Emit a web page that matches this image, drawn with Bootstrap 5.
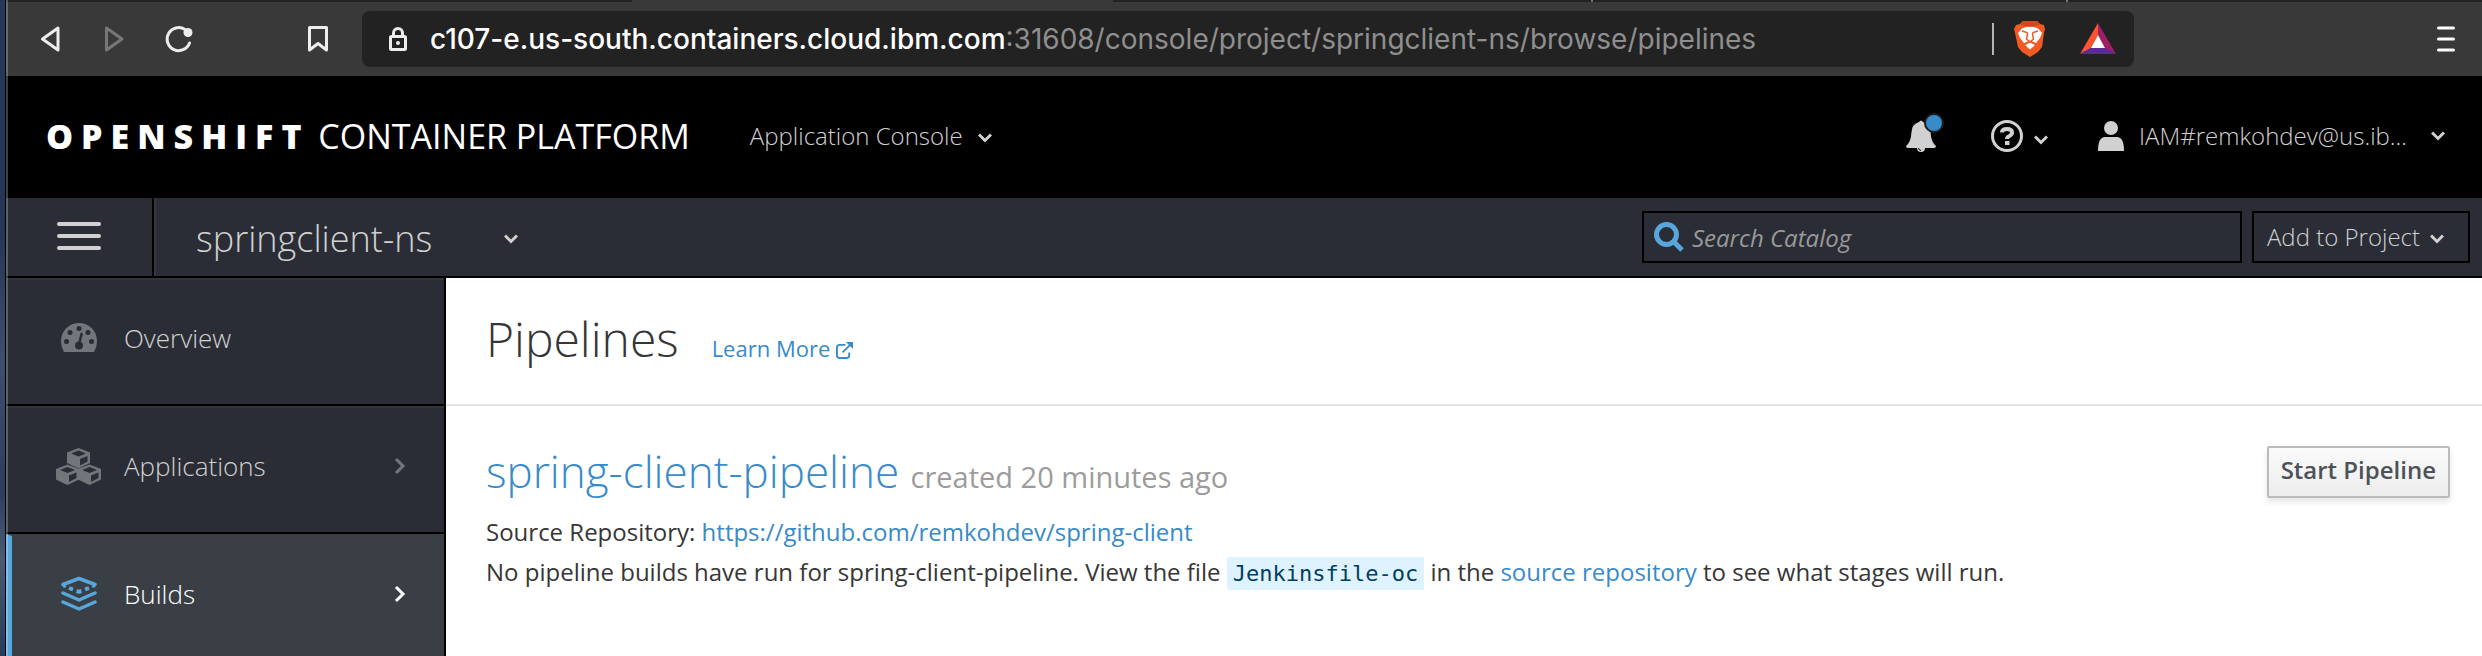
<!DOCTYPE html>
<html lang="en">
<head>
<meta charset="utf-8">
<meta name="viewport" content="width=device-width, initial-scale=1">
<title>Pipelines - OpenShift Container Platform</title>
<link href="https://cdn.jsdelivr.net/npm/bootstrap@5.3.0/dist/css/bootstrap.min.css" rel="stylesheet">
<style>
  body { font-family: "Open Sans", sans-serif; font-size: 24px; line-height: 40px; color: #363636; background: #fff; }
  svg { display: block; flex: none; }
  button { border: 0; background: none; padding: 0; color: inherit; font-weight: inherit; }
  a { color: #398ac9; text-decoration: none; }
  .desk { width: 6px; background: linear-gradient(#27395a, #243655 35%, #3d4f70 55%, #2b3d5e 75%, #4b5b75 85%, #293b5c); border-right: 1px solid #000; }
  .edge { width: 2px; background: rgba(255,255,255,.25); left: 0; top: 0; bottom: 0; z-index: 2; }
  .tabstrip { height: 2px; background: #393939; }
  .tabstrip .idle { background: #222; }
  .tabstrip .tick { width: 2px; background: #777; }
  .toolbar { min-height: 74px; background: #393939; color: #ededed; padding: 0 26px 0 34px; }
  .forward { margin-left: 42px; }
  .reload { margin-left: 38px; }
  .bookmark { margin-left: 113px; }
  .address { height: 56px; width: 1772px; border-radius: 8px; background: #222; margin-left: 33px; padding: 0 18px 0 26px; }
  .address .url { font: 500 28px/40px Inter, sans-serif; color: #fff; margin-left: 22px; }
  .address .path { font-weight: 400; color: #8f8f8f; }
  .address .rule { width: 2px; height: 32px; background: #b5b5b5; margin-right: 20px; }
  .address .rewards { margin-left: 34px; }
  .masthead { min-height: 122px; background: #000; color: #d1d1d1; font-weight: 300; font-size: 24px; padding: 0 37px 3px 40px; }
  .brand { color: #fff; font-size: 34px; font-weight: 400; }
  .brand b { font-weight: 800; letter-spacing: 8px; }
  .console-menu { margin-left: 60px; gap: 15px; }
  .help-menu { margin-left: 55px; gap: 11px; }
  .user-menu { margin-left: 50px; }
  .user-menu span { margin: 0 24px 0 15px; }
  .alert-dot { width: 20px; height: 20px; border: 2px solid #1d1d1d; border-radius: 50%; background: #398ac9; left: 18px; top: -7px; }
  .projectbar { min-height: 80px; background: #2a2d35; border-bottom: 2px solid #000; color: #d1d1d1; font-weight: 300; padding-right: 12px; }
  .burger { width: 148px; border-right: 2px solid #000; box-shadow: 2px 0 #33363d; padding-bottom: 2px; }
  .project { font-size: 36px; font-weight: 300; padding: 3px 0 0 42px; gap: 72px; }
  .catalog { width: 600px; height: 52px; border: 2px solid #000; padding: 0 10px; }
  .catalog input { background: none; border: 0; outline: 0; font-size: 24px; font-style: italic; font-weight: 400; color: #fff; min-width: 0; padding: 3px 0 1px; }
  .catalog input::placeholder { color: #999; opacity: 1; }
  .add { height: 52px; border: 2px solid #000; padding: 0 24px 0 13px; margin-left: 10px; gap: 10px; }
  .side { width: 440px; background: #2a2d35; border-right: 2px solid #000; }
  .side a { height: 128px; border-top: 2px solid #33363d; border-bottom: 2px solid #000; color: #d1d1d1; font-weight: 300; font-size: 26px; padding: 0 38px 8px 50px; }
  .side a.active { background: #393f45; border-top-color: #393f45; color: #fff; border-left: 6px solid #58a7dc; padding-left: 44px; }
  .side .glyph { width: 45px; margin-right: 23px; }
  .heading { min-height: 128px; border-bottom: 2px solid #e3e3e3; padding: 0 40px 4px; }
  .heading h1 { font-size: 48px; line-height: 64px; font-weight: 300; }
  .heading a { font-size: 22px; margin-left: 33px; gap: 6px; }
  .pipeline { padding: 38px 32px 20px 40px; }
  .pipeline h2 { font-size: 44px; line-height: 54px; font-weight: 300; margin-bottom: 8px; }
  .pipeline .age { font-size: 29px; font-weight: 400; color: #9c9c9c; }
  .pipeline code { font: 22px/34px "DejaVu Sans Mono", monospace; color: #00405f; background: #def3ff; padding: 4px 6px; border-radius: 2px; }
  .start { height: 52px; border: 2px solid #bbb; border-radius: 2px; background: linear-gradient(#fafafa, #ededed); color: #4d5258; font-weight: 600; line-height: 44px; padding: 0 12px 4px; margin-top: 2px; box-shadow: 0 4px 6px rgba(3,3,3,.1); }
</style>
</head>
<body>
<div class="d-flex vh-100 overflow-hidden">
  <div class="desk flex-shrink-0"></div>
  <div class="flex-grow-1 d-flex flex-column position-relative">
    <div class="edge position-absolute"></div>
    <div class="tabstrip d-flex flex-shrink-0">
      <div class="idle" style="width:25.3%"></div><div style="width:19.4%"></div><div class="idle" style="width:19.3%"></div><div class="tick"></div><div class="idle" style="width:19.1%"></div><div class="tick"></div><div class="idle flex-grow-1"></div>
    </div>

    <div class="toolbar d-flex align-items-center flex-shrink-0">
      <button aria-label="Back"><svg width="22" height="28" viewBox="0 0 22 28" fill="none" stroke="#ededed" stroke-width="3" stroke-linejoin="round"><path d="M18 3V25L2.500 14Z"/></svg></button>
      <button class="forward" aria-label="Forward"><svg width="22" height="28" viewBox="0 0 22 28" fill="none" stroke="#777" stroke-width="3" stroke-linejoin="round"><path d="M2.500 3V25L18 14Z"/></svg></button>
      <button class="reload" aria-label="Reload"><svg width="30" height="28" viewBox="0 0 30 28" fill="none" stroke="#ededed" stroke-width="3" stroke-linecap="round"><path d="M21 4.500A11.500 11.500 0 1 0 25.500 18"/><circle cx="24" cy="7.500" r="4.500" fill="#ededed" stroke="none"/></svg></button>
      <button class="bookmark" aria-label="Bookmark"><svg width="22" height="28" viewBox="0 0 22 28" fill="none" stroke="#ededed" stroke-width="3" stroke-linejoin="round"><path d="M2.500 2.500H19.500V25L11 18.500L2.500 25Z"/></svg></button>
      <div class="address d-flex align-items-center">
        <svg width="20" height="26" viewBox="0 0 20 26" fill="none" stroke="#ededed" stroke-width="3"><rect x="2.500" y="10.500" width="15" height="13" rx="1"/><path d="M5.500 10V7a4.500 4.500 0 0 1 9 0V10"/><circle cx="10" cy="17" r="2" fill="#ededed" stroke="none"/></svg>
        <span class="url">c107-e.us-south.containers.cloud.ibm.com<span class="path">:31608/console/project/springclient-ns/browse/pipelines</span></span>
        <span class="rule ms-auto"></span>
        <svg width="32" height="36" viewBox="0 0 32 36"><path d="M9 0H23L26 3L30 4L31 8L30 12L28 26L24 31L16 36L8 31L4 26L1 12L0 8L2 4L6 3Z" fill="#f15a24"/><path d="M9 0H23L26 3L22 5H10L6 3Z" fill="#cf4a1c"/><path d="M8 7.500L12 6H20L24 7.500L28 12L26 17L22 22L16 20L10 22L6 17L4 12Z" fill="#fff"/><path d="M16 21.500L21 24L16 28.500L11 24Z" fill="#fff"/><path d="M8 10L13 11.500L13.500 13L12.500 18L16 21L19.500 18L18.500 13L19 11.500L24 10M16 20L11 23M16 20L21 23" fill="none" stroke="#f15a24" stroke-width="1.500"/></svg>
        <svg class="rewards" width="36" height="32" viewBox="0 0 36 32"><path d="M18 0L0 31L11 25L18 12Z" fill="#ff5332"/><path d="M18 0L36 31L25 25L18 12Z" fill="#9e1f63"/><path d="M0 31H36L25 25H11Z" fill="#5c2d91"/><path d="M18 12L11 25H25Z" fill="#fff"/></svg>
      </div>
      <button class="ms-auto" aria-label="Menu"><svg width="20" height="28" viewBox="0 0 20 28" stroke="#fff" stroke-width="3" stroke-linecap="round"><path d="M2.500 3H17.500M2.500 14H17.500M2.500 25H17.500"/></svg></button>
    </div>

    <header class="masthead d-flex align-items-center flex-shrink-0">
      <div class="brand"><b>OPENSHIFT</b> CONTAINER PLATFORM</div>
      <button class="console-menu d-flex align-items-center">Application Console
        <svg class="mt-1" width="14" height="10" viewBox="0 0 14 10" fill="none" stroke="#d1d1d1" stroke-width="3"><path d="M1 1.500L7 7.500L13 1.500"/></svg></button>
      <button class="ms-auto position-relative" aria-label="Notifications"><svg width="30" height="32" viewBox="0 0 30 32" fill="#d1d1d1"><path d="M13 2Q15-1 17 2Q24 4 24.500 12Q25 22 30 26Q30 28 28 28H19A4 4 0 0 1 11 28H2Q0 28 0 26Q5 22 5.500 12Q6 4 13 2Z"/><path d="M12.500 28Q12.500 30 15 30.500" fill="none" stroke="#000"/></svg>
        <span class="alert-dot position-absolute"></span></button>
      <button class="help-menu d-flex align-items-center" aria-label="Help"><svg width="32" height="32" viewBox="0 0 32 32" fill="none" stroke="#d1d1d1"><circle cx="16" cy="16" r="14.500" stroke-width="3"/><path d="M11 12.500Q11 9 16 9Q21 9 21 12.500Q21 14.500 18.500 16Q16 17 16 19" stroke-width="4"/><path d="M14 23H18.500" stroke-width="4"/></svg>
        <svg class="mt-2" width="14" height="10" viewBox="0 0 14 10" fill="none" stroke="#d1d1d1" stroke-width="3"><path d="M1 1.500L7 7.500L13 1.500"/></svg></button>
      <button class="user-menu d-flex align-items-center"><svg width="26" height="30" viewBox="0 0 26 30" fill="#d1d1d1"><circle cx="13" cy="7" r="7"/><path d="M0 30Q0 16 7 16H19Q26 16 26 30Z"/></svg>
        <span>IAM#remkohdev@us.ib...</span>
        <svg width="14" height="10" viewBox="0 0 14 10" fill="none" stroke="#d1d1d1" stroke-width="3"><path d="M1 1.500L7 7.500L13 1.500"/></svg></button>
    </header>

    <div class="projectbar d-flex align-items-center flex-shrink-0">
      <button class="burger align-self-stretch d-flex align-items-center justify-content-center" aria-label="Toggle navigation"><svg width="44" height="28" viewBox="0 0 44 28" stroke="#d1d1d1" stroke-width="4" stroke-linecap="round"><path d="M2 2H42M2 14H42M2 26H42"/></svg></button>
      <button class="project d-flex align-items-center">springclient-ns
        <svg width="14" height="10" viewBox="0 0 14 10" fill="none" stroke="#d1d1d1" stroke-width="3"><path d="M1 1.500L7 7.500L13 1.500"/></svg></button>
      <label class="catalog d-flex align-items-center ms-auto">
        <svg width="30" height="30" viewBox="0 0 30 30" fill="none" stroke="#58a7dc"><circle cx="12.500" cy="12.500" r="10" stroke-width="5"/><path d="M20 20L28 28" stroke-width="5"/></svg>
        <input class="flex-grow-1 ms-2" type="search" placeholder="Search Catalog" aria-label="Search Catalog">
      </label>
      <button class="add d-flex align-items-center">Add to Project
        <svg class="mt-1" width="14" height="10" viewBox="0 0 14 10" fill="none" stroke="#d1d1d1" stroke-width="3"><path d="M1 1.500L7 7.500L13 1.500"/></svg></button>
    </div>

    <div class="d-flex flex-grow-1 overflow-hidden">
      <nav class="side flex-shrink-0">
        <a href="#" class="d-flex align-items-center"><span class="glyph d-flex justify-content-center"><svg width="36" height="30" viewBox="0 0 36 30"><path d="M3 29Q0 24 0 18A18 18 0 0 1 36 18Q36 24 33 29Z" fill="#72767b"/><g fill="#2a2d35"><circle cx="5.500" cy="18.500" r="2.500"/><circle cx="9" cy="9.500" r="2.500"/><circle cx="18" cy="5.500" r="2.500"/><circle cx="27" cy="9.500" r="2.500"/><circle cx="30.500" cy="18.500" r="2.500"/><circle cx="18" cy="22.500" r="4"/></g><path d="M18 22L20.500 11" stroke="#2a2d35" stroke-width="2.500" stroke-linecap="round"/></svg></span>Overview</a>
        <a href="#" class="d-flex align-items-center"><span class="glyph"><svg width="45" height="37" viewBox="0 0 45 37"><defs><g id="cube"><path d="M11.500 0L23 4.500V15L11.500 20.500L0 15V4.500Z" fill="#72767b"/><path d="M11.500 2.500L19 5.500L11.500 8.500L4 5.500ZM13 11L20.500 8V13.500L13 17.500Z" fill="#2a2d35"/></g></defs><use href="#cube" x="11"/><use href="#cube" y="16.500"/><use href="#cube" x="22" y="16.500"/></svg></span>Applications
          <svg class="ms-auto" width="12" height="18" viewBox="0 0 12 18" fill="none" stroke="#72767b" stroke-width="3"><path d="M2 2L9 9L2 16"/></svg></a>
        <a href="#" class="active d-flex align-items-center" aria-current="page"><span class="glyph d-flex justify-content-center"><svg width="36" height="36" viewBox="0 0 36 36" fill="none" stroke="#58a7dc" stroke-width="3.500" stroke-linejoin="round" stroke-linecap="round"><path d="M3.500 10L2 8.500L18 2.500L34 8.500L32.500 10"/><path d="M8 12L12 13.500M15.500 15L18 15.800L20.500 15M24 13.500L28 12" stroke-linecap="butt" stroke-width="4"/><path d="M2 17L18 24L34 17"/><path d="M2 26L18 33L34 26"/></svg></span>Builds
          <svg class="ms-auto" width="12" height="18" viewBox="0 0 12 18" fill="none" stroke="#fff" stroke-width="3"><path d="M2 2L9 9L2 16"/></svg></a>
      </nav>
      <main class="flex-grow-1 overflow-auto">
        <div class="heading d-flex align-items-center">
          <div class="d-flex align-items-baseline">
            <h1 class="m-0">Pipelines</h1>
            <a href="#" class="d-flex align-items-center">Learn More
              <svg class="mt-1" width="17" height="17" viewBox="0 0 18 18" fill="none" stroke="#398ac9" stroke-width="2"><path d="M10 3H4Q1 3 1 6V14Q1 17 4 17H11Q14 17 14 14V11"/><path d="M7 11L15 3"/><path d="M10.500 0H18V7.500Z" fill="#398ac9" stroke="none"/></svg></a>
          </div>
        </div>
        <section class="pipeline d-flex justify-content-between align-items-start">
          <div>
            <h2><a href="#">spring-client-pipeline</a> <span class="age">created 20 minutes ago</span></h2>
            <div>Source Repository: <a href="#">https://github.com/remkohdev/spring-client</a></div>
            <div>No pipeline builds have run for spring-client-pipeline. View the file <code>Jenkinsfile-oc</code> in the <a href="#">source repository</a> to see what stages will run.</div>
          </div>
          <button class="start">Start Pipeline</button>
        </section>
      </main>
    </div>
  </div>
</div>
<script src="https://cdn.jsdelivr.net/npm/bootstrap@5.3.0/dist/js/bootstrap.bundle.min.js"></script>
</body>
</html>
